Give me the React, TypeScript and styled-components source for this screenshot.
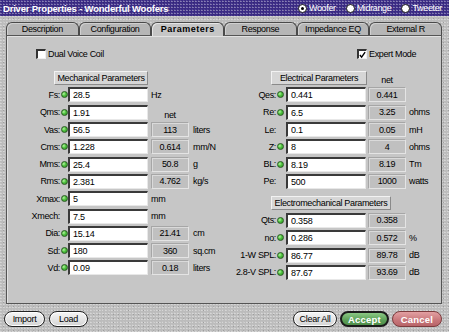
import React from "react";
import styled, { createGlobalStyle, css } from "styled-components";

const Global = createGlobalStyle`
  html, body { margin: 0; padding: 0; background: #bababa; }
  * { box-sizing: border-box; }
`;

const noise = css`
  background-image:
    radial-gradient(circle at 30% 40%, rgba(255, 255, 255, 0.4) 0 0.6px, transparent 0.9px),
    radial-gradient(circle at 70% 60%, rgba(0, 0, 0, 0.16) 0 0.6px, transparent 0.9px);
  background-size: 3px 3px, 5px 4px;
`;

const Window = styled.div`
  width: 449px;
  height: 332px;
  display: flex;
  flex-direction: column;
  background-color: #bcbcbc;
  ${noise};
  font-family: "Liberation Sans", Arial, sans-serif;
  font-size: 9px;
  letter-spacing: -0.35px;
  color: #000;
  overflow: hidden;
`;

const TitleBar = styled.div`
  height: 16px;
  flex: none;
  display: flex;
  align-items: center;
  justify-content: space-between;
  padding: 0 7px 0 3px;
  background-color: #3b2c85;
  ${noise};
  color: #fff;
`;

const Title = styled.div`
  font-weight: bold;
  font-size: 9.5px;
  letter-spacing: -0.2px;
`;

const RadioGroup = styled.div`
  display: flex;
  gap: 10px;
`;

const RadioOption = styled.div`
  display: flex;
  align-items: center;
  gap: 2px;
  font-size: 9px;
`;

const RadioDot = styled.span<{ $on?: boolean }>`
  width: 9px;
  height: 9px;
  border-radius: 50%;
  background: #fff;
  border: 1px solid #1a1a1a;
  display: flex;
  align-items: center;
  justify-content: center;
  &::after {
    content: "";
    width: 3px;
    height: 3px;
    border-radius: 50%;
    background: ${(p) => (p.$on ? "#000" : "transparent")};
  }
`;

const TabStrip = styled.div`
  height: 19px;
  flex: none;
  display: flex;
  align-items: flex-end;
  padding: 0 7px 0 6px;
  position: relative;
  z-index: 1;
`;

const Tab = styled.div<{ $active?: boolean }>`
  flex: 1;
  height: ${(p) => (p.$active ? "14px" : "13px")};
  margin-bottom: ${(p) => (p.$active ? "-1px" : "0")};
  display: flex;
  align-items: center;
  justify-content: center;
  border: 1px solid #4a4a4a;
  border-bottom: none;
  border-radius: 6px 6px 0 0;
  background: ${(p) => (p.$active ? "#c6c6c6" : "#b6b6b6")};
  box-shadow: inset 1px 1px 0 ${(p) => (p.$active ? "#e6e6e6" : "#d0d0d0")};
  font-weight: ${(p) => (p.$active ? "bold" : "normal")};
  font-size: 9px;
  letter-spacing: ${(p) => (p.$active ? "0.5px" : "-0.35px")};
  padding-bottom: ${(p) => (p.$active ? "1px" : "0")};
`;

const Panel = styled.div`
  flex: none;
  height: 269px;
  margin: 0 7px 0 6px;
  border: 1px solid #555;
  background: #c6c6c6;
  box-shadow: inset 1px 1px 0 #e2e2e2;
  display: grid;
  grid-template-columns: 217px 1fr;
`;

const Column = styled.div<{ $right?: boolean }>`
  display: flex;
  flex-direction: column;
  padding-top: 13px;
  --label-w: ${(p) => (p.$right ? "52px" : "53px")};
  --led-w: ${(p) => (p.$right ? "10px" : "8px")};
  --led-pad: ${(p) => (p.$right ? "1px" : "0.5px")};
  --net-gap: ${(p) => (p.$right ? "2px" : "3px")};
  --unit-gap: ${(p) => (p.$right ? "3px" : "4px")};
  --check-x: ${(p) => (p.$right ? "133px" : "29px")};
`;

const CheckRow = styled.div`
  height: 10px;
  display: flex;
  align-items: center;
  gap: 2px;
  margin-left: var(--check-x);
`;

const CheckBox = styled.span`
  width: 10px;
  height: 10px;
  background: #fff;
  border-top: 2px solid #333;
  border-left: 2px solid #333;
  border-right: 1px solid #efefef;
  border-bottom: 1px solid #efefef;
  display: flex;
  align-items: center;
  justify-content: center;
`;

const HeaderRow = styled.div<{ $gap: number }>`
  display: flex;
  align-items: flex-end;
  margin-top: ${(p) => p.$gap}px;
  margin-left: 47px;
  margin-bottom: 1.35px;
`;

const SectionButton = styled.div<{ $w: number }>`
  width: ${(p) => p.$w}px;
  height: 14px;
  display: flex;
  align-items: center;
  justify-content: center;
  background: #d6d6d6;
  border-top: 1px solid #f2f2f2;
  border-left: 1px solid #f2f2f2;
  border-right: 1px solid #8a8a8a;
  border-bottom: 1px solid #8a8a8a;
  white-space: nowrap;
`;

const HeaderNet = styled.div`
  width: 38px;
  margin-left: 1px;
  text-align: center;
  line-height: 10px;
`;

const Row = styled.div`
  height: 17.3px;
  display: flex;
  align-items: center;
`;

const Label = styled.div`
  width: var(--label-w);
  text-align: right;
  white-space: nowrap;
`;

const LedSlot = styled.div`
  width: var(--led-w);
  padding-left: var(--led-pad);
  display: flex;
  align-items: center;
`;

const Led = styled.span`
  width: 7px;
  height: 7px;
  border-radius: 50%;
  background: radial-gradient(circle at 35% 35%, #b6f2a2 0, #4cc23c 45%, #2f8a26 100%);
  border: 1px solid #2a5a22;
`;

const Field = styled.input`
  width: 80px;
  height: 15px;
  margin: 0;
  padding: 0 0 0 3px;
  background: #fff;
  border-top: 2px solid #3a3a3a;
  border-left: 2px solid #3a3a3a;
  border-right: 1px solid #e8e8e8;
  border-bottom: 1px solid #e8e8e8;
  font-family: "Liberation Sans", Arial, sans-serif;
  font-size: 9px;
  letter-spacing: -0.2px;
  color: #000;
  outline: none;
`;

const NetBox = styled.div`
  width: 38px;
  height: 15px;
  margin-left: var(--net-gap);
  display: flex;
  align-items: center;
  justify-content: center;
  background: #c0c0c0;
  border-top: 1px solid #a6a6a6;
  border-left: 1px solid #a6a6a6;
  border-right: 1px solid #e4e4e4;
  border-bottom: 1px solid #e4e4e4;
  box-shadow: inset 1px 1px 0 #dadada;
`;

const NetCaption = styled.div`
  width: 38px;
  margin-left: var(--net-gap);
  padding-top: 5px;
  text-align: center;
`;

const Unit = styled.div<{ $near?: boolean }>`
  margin-left: ${(p) => (p.$near ? "var(--net-gap)" : "var(--unit-gap)")};
  white-space: nowrap;
`;

const Footer = styled.div`
  flex: 1;
  display: flex;
  justify-content: space-between;
  align-items: flex-start;
  padding: 7px 7px 0 4px;
`;

const ButtonGroup = styled.div<{ $gap: number }>`
  display: flex;
  gap: ${(p) => p.$gap}px;
`;

type Variant = "plain" | "accept" | "cancel";

const PillButton = styled.button<{ $w: number; $variant?: Variant }>`
  width: ${(p) => p.$w}px;
  height: 16px;
  padding: 0;
  border-radius: 8px;
  font-family: "Liberation Sans", Arial, sans-serif;
  font-size: 9px;
  letter-spacing: -0.3px;
  display: flex;
  align-items: center;
  justify-content: center;
  cursor: pointer;
  ${(p) =>
    p.$variant === "accept"
      ? css`
          background: linear-gradient(#8ac884, #5c9f57 60%, #4f8f4a);
          border: 2px solid #1b1b1b;
          color: #fff;
          font-weight: bold;
          font-size: 9.5px;
          letter-spacing: 0.2px;
        `
      : p.$variant === "cancel"
      ? css`
          background: linear-gradient(#e3a0a2, #c7767a 60%, #b86468);
          border: 1.5px solid #7c3b3d;
          color: #fff;
          font-weight: bold;
          font-size: 9.5px;
          letter-spacing: 0.2px;
        `
      : css`
          background: linear-gradient(#f6f6f6, #d4d4d4);
          border: 1.5px solid #222;
          box-shadow: inset 0 0 0 1px #fff;
          color: #000;
        `}
`;

type Param = { label: string; value: string; led: boolean; net?: string; caption?: string; unit?: string };

const mechanical: Param[] = [
  { label: "Fs:", value: "28.5", led: true, unit: "Hz" },
  { label: "Qms:", value: "1.91", led: true, caption: "net" },
  { label: "Vas:", value: "56.5", led: true, net: "113", unit: "liters" },
  { label: "Cms:", value: "1.228", led: true, net: "0.614", unit: "mm/N" },
  { label: "Mms:", value: "25.4", led: true, net: "50.8", unit: "g" },
  { label: "Rms:", value: "2.381", led: true, net: "4.762", unit: "kg/s" },
  { label: "Xmax:", value: "5", led: true, unit: "mm" },
  { label: "Xmech:", value: "7.5", led: false, unit: "mm" },
  { label: "Dia:", value: "15.14", led: true, net: "21.41", unit: "cm" },
  { label: "Sd:", value: "180", led: true, net: "360", unit: "sq.cm" },
  { label: "Vd:", value: "0.09", led: true, net: "0.18", unit: "liters" },
];

const electrical: Param[] = [
  { label: "Qes:", value: "0.441", led: true, net: "0.441" },
  { label: "Re:", value: "6.5", led: true, net: "3.25", unit: "ohms" },
  { label: "Le:", value: "0.1", led: false, net: "0.05", unit: "mH" },
  { label: "Z:", value: "8", led: true, net: "4", unit: "ohms" },
  { label: "BL:", value: "8.19", led: true, net: "8.19", unit: "Tm" },
  { label: "Pe:", value: "500", led: false, net: "1000", unit: "watts" },
];

const electromech: Param[] = [
  { label: "Qts:", value: "0.358", led: true, net: "0.358" },
  { label: "no:", value: "0.286", led: true, net: "0.572", unit: "%" },
  { label: "1-W SPL:", value: "86.77", led: true, net: "89.78", unit: "dB" },
  { label: "2.8-V SPL:", value: "87.67", led: true, net: "93.69", unit: "dB" },
];

const tabs = ["Description", "Configuration", "Parameters", "Response", "Impedance EQ", "External R"];

function ParamRow({ p }: { p: Param }) {
  return (
    <Row>
      <Label>{p.label}</Label>
      <LedSlot>{p.led && <Led />}</LedSlot>
      <Field value={p.value} readOnly />
      {p.net && <NetBox>{p.net}</NetBox>}
      {p.caption && <NetCaption>{p.caption}</NetCaption>}
      {p.unit && <Unit $near={!p.net && !p.caption}>{p.unit}</Unit>}
    </Row>
  );
}

function Check() {
  return (
    <svg width="8" height="8" viewBox="0 0 8 8">
      <path d="M1 4 L3 6.5 L7 0.8" fill="none" stroke="#000" strokeWidth="1.6" />
    </svg>
  );
}

export default function App() {
  return (
    <>
      <Global />
      <Window>
        <TitleBar>
          <Title>Driver Properties - Wonderful Woofers</Title>
          <RadioGroup>
            <RadioOption>
              <RadioDot $on />
              Woofer
            </RadioOption>
            <RadioOption>
              <RadioDot />
              Midrange
            </RadioOption>
            <RadioOption>
              <RadioDot />
              Tweeter
            </RadioOption>
          </RadioGroup>
        </TitleBar>
        <TabStrip>
          {tabs.map((t) => (
            <Tab key={t} $active={t === "Parameters"}>
              {t}
            </Tab>
          ))}
        </TabStrip>
        <Panel>
          <Column>
            <CheckRow>
              <CheckBox />
              Dual Voice Coil
            </CheckRow>
            <HeaderRow $gap={12}>
              <SectionButton $w={94}>Mechanical Parameters</SectionButton>
            </HeaderRow>
            {mechanical.map((p) => (
              <ParamRow key={p.label} p={p} />
            ))}
          </Column>
          <Column $right>
            <CheckRow>
              <CheckBox>
                <Check />
              </CheckBox>
              Expert Mode
            </CheckRow>
            <HeaderRow $gap={12}>
              <SectionButton $w={96}>Electrical Parameters</SectionButton>
              <HeaderNet>net</HeaderNet>
            </HeaderRow>
            {electrical.map((p) => (
              <ParamRow key={p.label} p={p} />
            ))}
            <HeaderRow $gap={6.35}>
              <SectionButton $w={120}>Electromechanical Parameters</SectionButton>
            </HeaderRow>
            {electromech.map((p) => (
              <ParamRow key={p.label} p={p} />
            ))}
          </Column>
        </Panel>
        <Footer>
          <ButtonGroup $gap={4}>
            <PillButton $w={41}>Import</PillButton>
            <PillButton $w={39}>Load</PillButton>
          </ButtonGroup>
          <ButtonGroup $gap={3}>
            <PillButton $w={44}>Clear All</PillButton>
            <PillButton $w={49} $variant="accept">
              Accept
            </PillButton>
            <PillButton $w={50} $variant="cancel">
              Cancel
            </PillButton>
          </ButtonGroup>
        </Footer>
      </Window>
    </>
  );
}
